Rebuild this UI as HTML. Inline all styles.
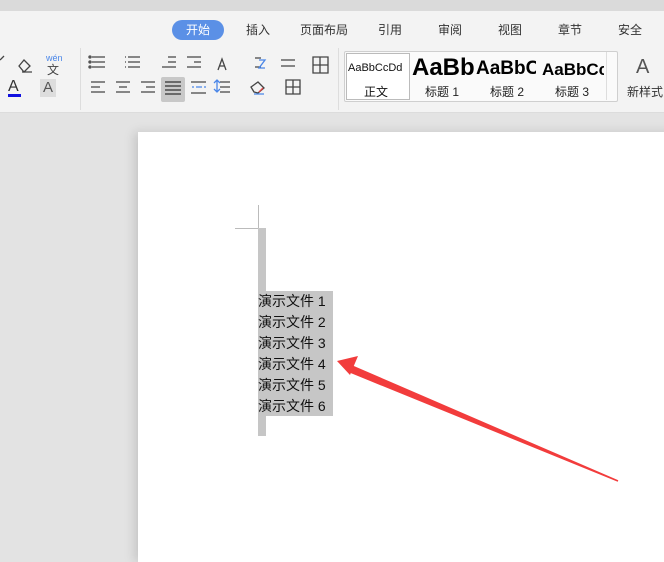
<!DOCTYPE html>
<html><head><meta charset="utf-8"><style>
body{margin:0;width:664px;height:548px;overflow:hidden;background:#e3e3e3;font-family:"Liberation Sans","Noto Sans CJK SC",sans-serif;position:relative}
.a{position:absolute}
.top{left:0;top:0;width:664px;height:11px;background:#dadada}
.rib{left:0;top:11px;width:664px;height:101px;background:#f3f3f3;border-bottom:1px solid #dcdcdc}
.tab{top:21px;font-size:12px;color:#333}
.page{left:138px;top:132px;width:540px;height:430px;background:#fff;box-shadow:-4px 0 10px rgba(0,0,0,.13)}
.sel{background:#c6c6c6}
.t{font-size:14px;color:#111;line-height:21px;left:258px}
</style></head><body>
<div class="a top"></div>
<div class="a rib"></div>
<div class="a" style="left:172px;top:20px;width:52px;height:20px;border-radius:10px;background:#5b90e6;color:#fff;font-size:12px;text-align:center;line-height:20px">开始</div>
<div class="a tab" style="left:246px">插入</div>
<div class="a tab" style="left:300px">页面布局</div>
<div class="a tab" style="left:378px">引用</div>
<div class="a tab" style="left:438px">审阅</div>
<div class="a tab" style="left:498px">视图</div>
<div class="a tab" style="left:558px">章节</div>
<div class="a tab" style="left:618px">安全</div>
<div class="a" style="left:80px;top:48px;width:1px;height:62px;background:#ddd"></div>
<div class="a" style="left:338px;top:48px;width:1px;height:62px;background:#ddd"></div>
<div class="a" style="left:46px;top:53px;font-size:9px;color:#4a86e8">wén</div>
<div class="a" style="left:47px;top:61px;font-size:12px;color:#444">文</div>
<div class="a" style="left:8px;top:78px;font-size:16px;color:#333">A</div>
<div class="a" style="left:8px;top:94px;width:13px;height:3px;background:#1010e0"></div>
<div class="a" style="left:40px;top:79px;width:16px;height:18px;background:#ddd;font-size:15px;color:#555;text-align:center">A</div>
<svg class="a" style="left:0;top:0" width="340" height="112" fill="none" stroke-width="1.3">
<g stroke="#444">
<path d="M0 60l4 -4M19 66l5-6 6 6-6 6zM22 72h10"/>
<path d="M92 57h13M92 62h13M92 67h13"/><circle cx="90" cy="57" r="1"/><circle cx="90" cy="62" r="1"/><circle cx="90" cy="67" r="1"/>
<path d="M128 57h12M128 62h12M128 67h12M125 57h1M125 62h1M125 67h1"/>
<path d="M168 57h8M168 62h8M162 67h14M187 57h14M194 62h7M187 67h14"/>
<path d="M218 70l4-11 4 11M219 66h6"/>
<path d="M255 58h6M255 67h6M281 60h14M281 66h14M313 57h15v16h-15zM320 57v16M313 65h15"/>
<path d="M91 82h14M91 87h9M91 92h14M116 82h14M119 87h8M116 92h14M141 82h14M146 87h9M141 92h14"/>
<path d="M191 82h15M191 93h15M220 82h10M220 87h10M220 92h10"/>
<path d="M254 92l-3-5 7-5 6 6-6 5zM286 80h14v14h-14zM293 80v14M286 87h14"/>
</g>
<rect x="161" y="77" width="24" height="25" fill="#c8c8c8" rx="2"/>
<path d="M165 82h16M165 86h16M165 90h16M165 94h16" stroke="#333"/>
<path d="M196 87h6M192 87h2M204 87h2M217 80v12M214 83l3-3 3 3M214 89l3 3 3-3M259 60h6l-6 8h6M254 94h10" stroke="#4a86e8"/>
<path d="M259 92l4-4" stroke="#d44"/>
</svg>
<div class="a" style="left:344px;top:51px;width:272px;height:49px;border:1px solid #cfcfcf;background:#fafafa;border-radius:2px"></div>
<div class="a" style="left:346px;top:53px;width:62px;height:45px;border:1px solid #bbb;background:#fff"></div>
<div class="a" style="left:348px;top:62px;font-size:11px;color:#111">AaBbCcDd</div>
<div class="a" style="left:364px;top:83px;font-size:12px;color:#111">正文</div>
<div class="a" style="left:412px;top:54px;width:62px;overflow:hidden;font-size:24px;font-weight:bold;white-space:nowrap;color:#000">AaBb</div>
<div class="a" style="left:425px;top:83px;font-size:12px;color:#222">标题 1</div>
<div class="a" style="left:476px;top:58px;width:60px;overflow:hidden;font-size:19px;font-weight:bold;white-space:nowrap;color:#000">AaBbC</div>
<div class="a" style="left:490px;top:83px;font-size:12px;color:#222">标题 2</div>
<div class="a" style="left:542px;top:60px;width:62px;overflow:hidden;font-size:17px;font-weight:bold;white-space:nowrap;color:#000">AaBbCc</div>
<div class="a" style="left:555px;top:83px;font-size:12px;color:#222">标题 3</div>
<div class="a" style="left:606px;top:52px;width:1px;height:48px;background:#ddd"></div>
<div class="a" style="left:636px;top:56px;font-size:20px;color:#555">A</div>
<div class="a" style="left:627px;top:83px;font-size:12px;color:#333">新样式</div>
<div class="a page"></div>
<div class="a" style="left:258px;top:205px;width:1px;height:23px;background:#bbb"></div>
<div class="a" style="left:235px;top:228px;width:23px;height:1px;background:#bbb"></div>
<div class="a sel" style="left:258px;top:228px;width:8px;height:208px"></div>
<div class="a sel" style="left:258px;top:291px;width:75px;height:125px"></div>
<div class="a t" style="top:291px">演示文件 1<br>演示文件 2<br>演示文件 3<br>演示文件 4<br>演示文件 5<br>演示文件 6</div>
<svg class="a" style="left:0;top:0" width="664" height="548">
<path d="M618 481L352 366L350 372Z" fill="#f23c3c" stroke="#f23c3c" stroke-width="1.5"/>
<path d="M337 361L358 356L350 375Z" fill="#f23c3c"/>
</svg>
</body></html>
